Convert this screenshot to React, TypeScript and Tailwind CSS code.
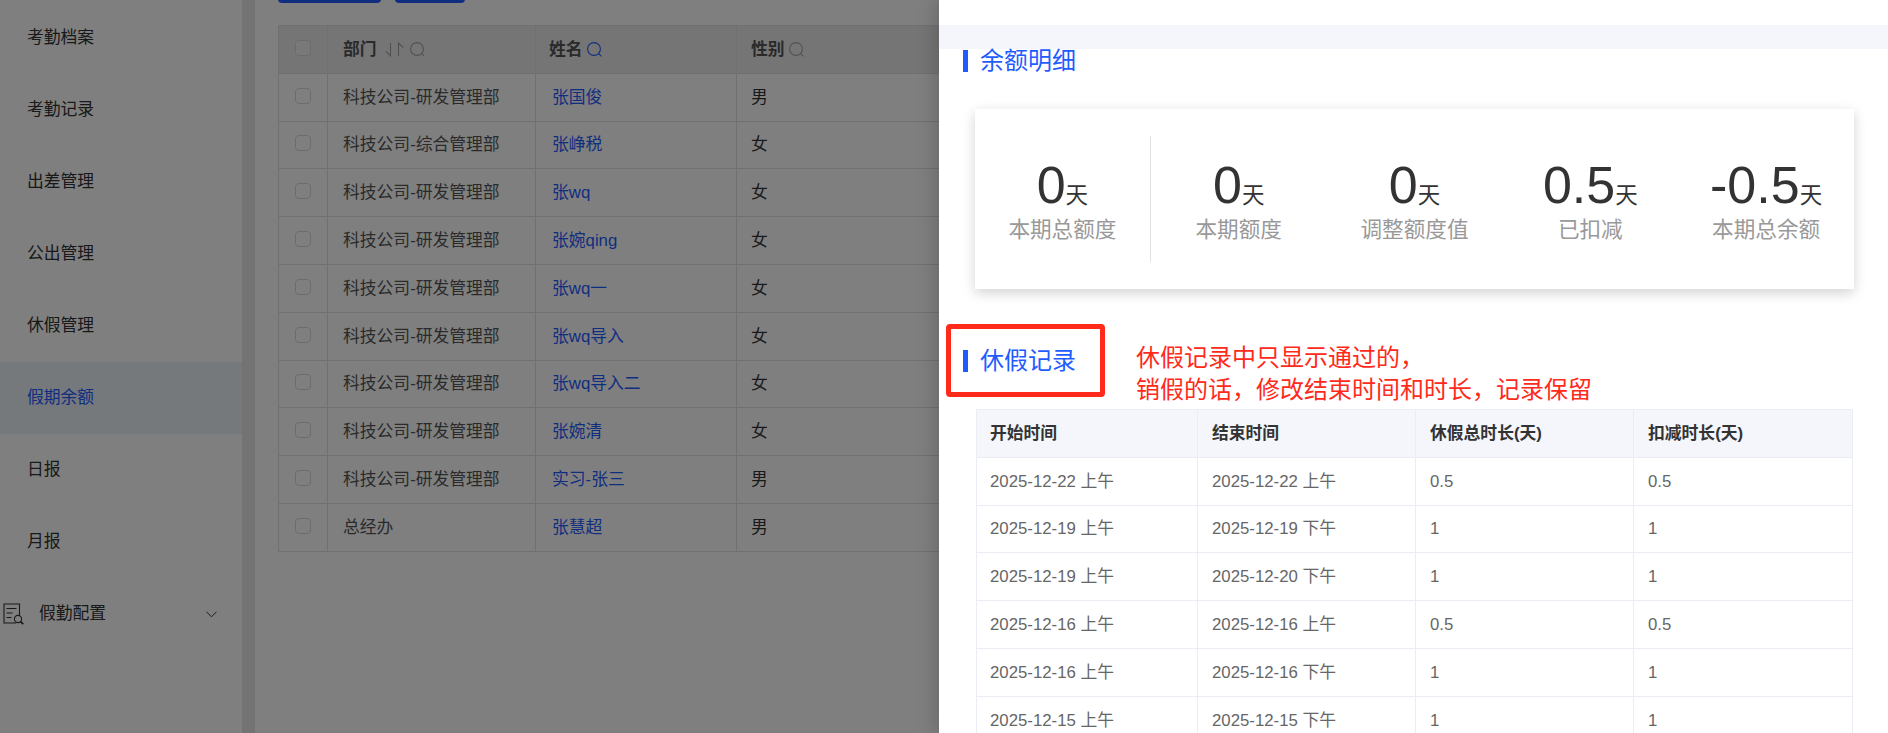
import { FC } from "react";

const menus = ["考勤档案", "考勤记录", "出差管理", "公出管理", "休假管理", "假期余额", "日报", "月报"];

const people = [
  ["科技公司-研发管理部", "张国俊", "男"],
  ["科技公司-综合管理部", "张峥税", "女"],
  ["科技公司-研发管理部", "张wq", "女"],
  ["科技公司-研发管理部", "张婉qing", "女"],
  ["科技公司-研发管理部", "张wq一", "女"],
  ["科技公司-研发管理部", "张wq导入", "女"],
  ["科技公司-研发管理部", "张wq导入二", "女"],
  ["科技公司-研发管理部", "张婉清", "女"],
  ["科技公司-研发管理部", "实习-张三", "男"],
  ["总经办", "张慧超", "男"],
];

const stats = [
  ["0", "本期总额度"],
  ["0", "本期额度"],
  ["0", "调整额度值"],
  ["0.5", "已扣减"],
  ["-0.5", "本期总余额"],
];

const records = [
  ["2025-12-22 上午", "2025-12-22 上午", "0.5", "0.5"],
  ["2025-12-19 上午", "2025-12-19 下午", "1", "1"],
  ["2025-12-19 上午", "2025-12-20 下午", "1", "1"],
  ["2025-12-16 上午", "2025-12-16 上午", "0.5", "0.5"],
  ["2025-12-16 上午", "2025-12-16 下午", "1", "1"],
  ["2025-12-15 上午", "2025-12-15 下午", "1", "1"],
];

const SearchIcon: FC<{ color: string }> = ({ color }) => (
  <svg width="15" height="15" viewBox="0 0 15 15" fill="none" stroke={color} strokeWidth="1.1">
    <circle cx="7" cy="7" r="6.4" />
    <path d="M11.6 11.6l2.8 2.8" />
  </svg>
);

const SortIcon = () => (
  <svg width="19" height="15" viewBox="0 0 19 15" fill="none" stroke="#a3a3a3" strokeWidth="1.1">
    <path d="M5.5 1v13L.8 9.3" />
    <path d="M13.5 14V1l4.7 4.7" />
  </svg>
);

const ConfigIcon = () => (
  <svg width="22" height="22" viewBox="0 0 22 22" fill="none" stroke="#333" strokeWidth="1.1">
    <path d="M13 20H1V1h15.5v11" />
    <path d="M3.5 5.5h10M3.5 10h6M3.5 14.5h5" />
    <circle cx="15" cy="16" r="3.6" />
    <path d="M17.6 18.6l2.6 2.6" strokeWidth="1.8" />
  </svg>
);

const SectionTitle: FC<{ text: string }> = ({ text }) => (
  <div className="flex h-[22px] items-center gap-3 pl-6">
    <div className="h-[22px] w-[5px] bg-[#1f5cff]"></div>
    <div className="text-[24px] leading-[22px] text-[#1f5cff]">{text}</div>
  </div>
);

export default function App() {
  return (
    <div
      className="relative flex h-[733px] w-full overflow-hidden bg-white"
      style={{ fontFamily: '"Liberation Sans", "Noto Sans CJK SC", sans-serif' }}
    >
      {/* sidebar */}
      <div className="w-[242px] shrink-0 pt-[1.5px] text-[16.8px] text-[#333]">
        {menus.map((m) => (
          <div
            key={m}
            className={
              m === "假期余额"
                ? "flex h-[72px] items-center bg-[#eaf3f9] pt-px pl-[27px] text-[#1f5cff]"
                : "flex h-[72px] items-center pt-px pl-[27px]"
            }
          >
            {m}
          </div>
        ))}
        <div className="flex h-[72px] items-center pt-px pl-[3px]">
          <ConfigIcon />
          <span className="ml-[14px]">假勤配置</span>
          <svg className="ml-[100px]" width="11" height="7" viewBox="0 0 11 7" fill="none" stroke="#333" strokeWidth="1">
            <path d="M.5.8l5 5 5-5" />
          </svg>
        </div>
      </div>
      <div className="w-[13px] shrink-0 bg-[#e6e6e6]"></div>

      {/* list */}
      <div className="flex-1 pl-[23px]">
        <div className="-mt-[29px] flex gap-[14px]">
          <button className="h-8 w-[103px] rounded bg-[#1f5cff]"></button>
          <button className="h-8 w-[70px] rounded bg-[#1f5cff]"></button>
        </div>
        <table className="mt-[22px] w-[662px] table-fixed border-collapse text-[16.8px] text-[#333]">
          <thead>
            <tr className="h-[47.8px] bg-[#ebebeb] text-left">
              <th className="w-[49px] border border-[#e0e0e0] text-center">
                <span className="mt-1 inline-block h-4 w-4 rounded-sm border border-[#d9d9d9] bg-[#f3f3f3]"></span>
              </th>
              <th className="w-[208px] border border-[#e0e0e0] pl-[15px] font-bold">
                <div className="flex items-center text-[#555]">
                  部门
                  <span className="ml-[8px]"><SortIcon /></span>
                  <span className="ml-[6px]"><SearchIcon color="#a3a3a3" /></span>
                </div>
              </th>
              <th className="w-[201px] border border-[#e0e0e0] pl-[13px] font-bold">
                <div className="flex items-center gap-[4px] text-[#555]">
                  姓名
                  <SearchIcon color="#1f5cff" />
                </div>
              </th>
              <th className="border border-[#e0e0e0] pl-[14px] font-bold">
                <div className="flex items-center gap-[4px] text-[#555]">
                  性别
                  <SearchIcon color="#a3a3a3" />
                </div>
              </th>
            </tr>
          </thead>
          <tbody>
            {people.map((p, i) => (
              <tr key={i} className="h-[47.8px]">
                <td className="border border-[#e0e0e0] text-center">
                  <span className="mt-1 inline-block h-4 w-4 rounded-sm border border-[#d9d9d9]"></span>
                </td>
                <td className="border border-[#e0e0e0] pl-[15px] text-[#555]">{p[0]}</td>
                <td className="border border-[#e0e0e0] pl-4 text-[#1f5cff]">{p[1]}</td>
                <td className="border border-[#e0e0e0] pl-[14px]">{p[2]}</td>
              </tr>
            ))}
          </tbody>
        </table>
      </div>

      {/* dim layer */}
      <div className="absolute inset-0 bg-black/50"></div>

      {/* drawer */}
      <div className="absolute top-0 right-0 bottom-0 w-[949px] overflow-hidden bg-white shadow-[-6px_0_16px_rgba(0,0,0,0.15)]">
        <div className="mt-[25px] h-6 bg-[#f4f6fb]"></div>
        <div className="mt-px">
          <SectionTitle text="余额明细" />
        </div>

        <div className="mt-[37px] ml-9 grid h-[180px] w-[879px] grid-cols-5 items-center bg-white py-[27px] shadow-[0_4px_12px_rgba(0,0,0,0.18)]">
          {stats.map((s, i) => (
            <div
              key={s[1]}
              className={i === 0 ? "flex h-full flex-col items-center justify-center border-r border-[#e3e3e3] pt-[3px]" : "flex h-full flex-col items-center justify-center pt-[3px]"}
            >
              <div className="flex items-baseline text-[52px] leading-[56px] text-[#333]">
                {s[0]}
                <span className="text-[22.5px]">天</span>
              </div>
              <div className="-mt-[8px] text-[21.6px] leading-[28px] text-[#999]">{s[1]}</div>
            </div>
          ))}
        </div>

        <div className="mt-[61px]">
          <SectionTitle text="休假记录" />
        </div>

        <table className="mt-[37px] ml-[37px] w-[876px] table-fixed border-collapse text-[16.8px] text-[#666]">
          <colgroup>
            <col className="w-[221px]" />
            <col className="w-[218px]" />
            <col className="w-[218px]" />
            <col className="w-[219px]" />
          </colgroup>
          <thead>
            <tr className="h-[47.8px] bg-[#f4f6fb] text-left font-bold text-[#333]">
              {["开始时间", "结束时间", "休假总时长(天)", "扣减时长(天)"].map((h, j) => (
                <th key={h} className={j === 0 ? "border border-[#ebedf5] pl-[13px] font-bold" : "border border-[#ebedf5] pl-[14px] font-bold"}>{h}</th>
              ))}
            </tr>
          </thead>
          <tbody>
            {records.map((r, i) => (
              <tr key={i} className="h-[47.8px]">
                {r.map((c, j) => (
                  <td key={j} className={j === 0 ? "border border-[#ebedf5] pl-[13px]" : "border border-[#ebedf5] pl-[14px]"}>{c}</td>
                ))}
              </tr>
            ))}
          </tbody>
        </table>

        {/* annotation */}
        <div className="absolute top-[324px] left-[7px] h-[73px] w-[159px] rounded border-[5px] border-[#ff2a1a]"></div>
        <div className="absolute top-[342px] left-[197px] text-[24px] leading-[32px] whitespace-nowrap text-[#ff2a1a]">
          休假记录中只显示通过的，
          <br />
          销假的话，修改结束时间和时长，记录保留
        </div>
      </div>
    </div>
  );
}
